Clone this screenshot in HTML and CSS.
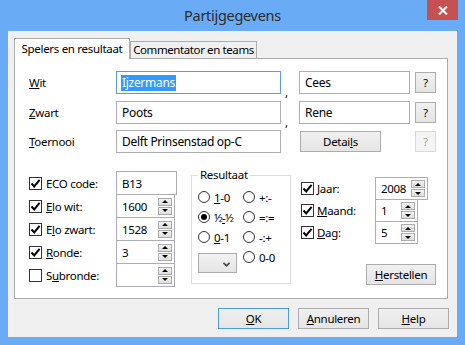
FILE: index.html
```html
<!DOCTYPE html>
<html>
<head>
<meta charset="utf-8">
<link rel="stylesheet" href="styles.css">
</head>
<body>
<div class="window">
  <div class="titlebar">
    <div class="title">Partijgegevens</div>
    <div class="close"><svg width="10" height="9" viewBox="0 0 10 9"><path d="M1 0.5 L9 8.5 M9 0.5 L1 8.5" stroke="#fff" stroke-width="2"/></svg></div>
  </div>
  <div class="client">
    <div class="tabs">
      <div class="tab active">Spelers en resultaat</div>
      <div class="tab">Commentator en teams</div>
    </div>
    <div class="panel">
      <div class="names">
        <div class="lbl"><u>W</u>it</div>
        <div class="field focus"><span class="sel">Ijzermans</span></div>
        <div class="comma">,</div>
        <div class="field first">Cees</div>
        <div class="btn qbtn">?</div>

        <div class="lbl"><u>Z</u>wart</div>
        <div class="field">Poots</div>
        <div class="comma">,</div>
        <div class="field first">Rene</div>
        <div class="btn qbtn">?</div>

        <div class="lbl"><u>T</u>oernooi</div>
        <div class="field">Delft Prinsenstad op-C</div>
        <div></div>
        <div class="btn details">Detai<u>l</u>s</div>
        <div class="btn qbtn disabled">?</div>
      </div>

      <div class="lower">
        <div class="fields">
          <div class="frow">
            <div class="lab"><span class="cb on"><svg width="11" height="11" viewBox="0 0 11 11"><path d="M1.5 5.5 L4.2 8.4 L9.6 1.8" fill="none" stroke="#000" stroke-width="2"/></svg></span>ECO code:</div>
            <div class="box eco">B13</div>
          </div>
          <div class="frow">
            <div class="lab"><span class="cb on"><svg width="11" height="11" viewBox="0 0 11 11"><path d="M1.5 5.5 L4.2 8.4 L9.6 1.8" fill="none" stroke="#000" stroke-width="2"/></svg></span><span><u>E</u>lo wit:</span></div>
            <div class="box spinbox">1600<span class="spin"><span class="sb up"></span><span class="sb down"></span></span></div>
          </div>
          <div class="frow">
            <div class="lab"><span class="cb on"><svg width="11" height="11" viewBox="0 0 11 11"><path d="M1.5 5.5 L4.2 8.4 L9.6 1.8" fill="none" stroke="#000" stroke-width="2"/></svg></span><span>E<u>l</u>o zwart:</span></div>
            <div class="box spinbox">1528<span class="spin"><span class="sb up"></span><span class="sb down"></span></span></div>
          </div>
          <div class="frow">
            <div class="lab"><span class="cb on"><svg width="11" height="11" viewBox="0 0 11 11"><path d="M1.5 5.5 L4.2 8.4 L9.6 1.8" fill="none" stroke="#000" stroke-width="2"/></svg></span><span><u>R</u>onde:</span></div>
            <div class="box spinbox">3<span class="spin"><span class="sb up"></span><span class="sb down"></span></span></div>
          </div>
          <div class="frow">
            <div class="lab"><span class="cb"></span><span>S<u>u</u>bronde:</span></div>
            <div class="box spinbox"><span class="spin"><span class="sb up"></span><span class="sb down"></span></span></div>
          </div>
        </div>

        <fieldset class="group">
          <legend>Resultaat</legend>
          <div class="rgrid">
            <div class="ri"><span class="radio"></span><span><u>1</u>-0</span></div>
            <div class="ri"><span class="radio"></span><span>+:-</span></div>
            <div class="ri"><span class="radio on"></span><span class="half">½<u>-</u>½</span></div>
            <div class="ri"><span class="radio"></span><span>=:=</span></div>
            <div class="ri"><span class="radio"></span><span><u>0</u>-1</span></div>
            <div class="ri"><span class="radio"></span><span>-:+</span></div>
            <div class="combo"><svg width="7" height="5" viewBox="0 0 7 5"><path d="M0.5 0.8 L3.5 3.8 L6.5 0.8" fill="none" stroke="#444" stroke-width="1.6"/></svg></div>
            <div class="ri"><span class="radio"></span><span>0-0</span></div>
          </div>
        </fieldset>

        <div class="date">
          <div class="drow">
            <div class="lab"><span class="cb on"><svg width="11" height="11" viewBox="0 0 11 11"><path d="M1.5 5.5 L4.2 8.4 L9.6 1.8" fill="none" stroke="#000" stroke-width="2"/></svg></span><span><u>J</u>aar:</span></div>
            <div class="box spinbox jaar">2008<span class="spin"><span class="sb up"></span><span class="sb down"></span></span></div>
          </div>
          <div class="drow">
            <div class="lab"><span class="cb on"><svg width="11" height="11" viewBox="0 0 11 11"><path d="M1.5 5.5 L4.2 8.4 L9.6 1.8" fill="none" stroke="#000" stroke-width="2"/></svg></span><span><u>M</u>aand:</span></div>
            <div class="box spinbox small">1<span class="spin"><span class="sb up"></span><span class="sb down"></span></span></div>
          </div>
          <div class="drow">
            <div class="lab"><span class="cb on"><svg width="11" height="11" viewBox="0 0 11 11"><path d="M1.5 5.5 L4.2 8.4 L9.6 1.8" fill="none" stroke="#000" stroke-width="2"/></svg></span><span><u>D</u>ag:</span></div>
            <div class="box spinbox small">5<span class="spin"><span class="sb up"></span><span class="sb down"></span></span></div>
          </div>
          <div class="btn herstellen"><span><u>H</u>erstellen</span></div>
        </div>
      </div>
    </div>
    <div class="buttons">
      <div class="btn dlg default"><u>O</u>K</div>
      <div class="btn dlg"><span><u>A</u>nnuleren</span></div>
      <div class="btn dlg"><span><u>H</u>elp</span></div>
    </div>
  </div>
</div>
</body>
</html>
```
FILE: styles.css
```css
* { box-sizing: border-box; }
html, body { margin: 0; padding: 0; }
body {
  width: 465px;
  height: 345px;
  overflow: hidden;
  font-family: "Noto Sans", "Open Sans", sans-serif;
  font-size: 11.5px;
  letter-spacing: -0.3px;
  color: #000;
}
u { text-decoration-thickness: 1px; text-underline-offset: 1px; }

.window {
  width: 465px;
  height: 345px;
  background: #6aabf5;
  display: flex;
  flex-direction: column;
}
.titlebar {
  height: 31px;
  display: grid;
  grid-template-columns: 1fr auto 1fr;
  align-items: start;
}
.title {
  grid-column: 2;
  font-size: 14.5px;
  line-height: 30px;
  color: #2b2b2b;
}
.close {
  grid-column: 3;
  justify-self: end;
  margin-right: 7px;
  width: 31px;
  height: 20px;
  background: #c75050;
  display: flex;
  align-items: center;
  justify-content: center;
}

.client {
  flex: 1;
  margin: 0 8px 8px 8px;
  background: #f0f0f0;
  display: flex;
  flex-direction: column;
  padding: 7px 9px 0 6px;
}

.tabs {
  display: flex;
  align-items: flex-end;
  height: 21px;
  margin-bottom: -1px;
  position: relative;
  z-index: 1;
}
.tab {
  width: 127px;
  height: 18px;
  border: 1px solid #acacac;
  background: #f0f0f0;
  text-align: center;
  line-height: 16px;
  white-space: nowrap;
  letter-spacing: -0.4px;
}
.tab.active {
  width: 116px;
  height: 21px;
  background: #fff;
  border-bottom: none;
  line-height: 19px;
  letter-spacing: -0.3px;
}

.panel {
  background: #fff;
  border: 1px solid #acacac;
  height: 241px;
  padding: 12px 0 0 14px;
}

.names {
  display: grid;
  grid-template-columns: 87px 165px 18px 116px 21px;
  grid-template-rows: 23px 23px 23px;
  row-gap: 6.5px;
  align-items: center;
}
.lbl { align-self: center; }
.field {
  height: 23px;
  border: 1px solid #abadb3;
  display: flex;
  align-items: center;
  padding-left: 5px;
  font-size: 12px;
  letter-spacing: -0.3px;
  background: #fff;
  white-space: nowrap;
}
.field.first { width: 111px; }
.field.focus { border-color: #569de5; }
.sel {
  background: #3399ff;
  color: #fff;
  line-height: 16px;
  padding: 0 1px;
  margin-left: -1px;
}
.comma {
  align-self: end;
  padding-left: 4px;
  line-height: 10px;
  margin-bottom: -4px;
}

.btn {
  border: 1px solid #acacac;
  background: linear-gradient(#f0f0f0, #e5e5e5);
  display: flex;
  align-items: center;
  justify-content: center;
  height: 21px;
  white-space: nowrap;
}
.qbtn { width: 21px; justify-self: start; font-size: 11px; }
.qbtn.disabled {
  border-color: #d9d9d9;
  background: #f4f4f4;
  color: #a3a3a3;
}
.details { width: 81px; margin-left: 1px; }

.lower {
  display: flex;
  align-items: flex-start;
  margin-top: 15px;
}

.fields {
  width: 148px;
  margin-top: 3px;
  display: flex;
  flex-direction: column;
}
.frow, .drow {
  display: flex;
  align-items: center;
  height: 24px;
}
.frow + .frow { margin-top: -1px; }
.frow .lab { width: 87px; }
.lab { display: flex; align-items: center; gap: 4px; white-space: nowrap; }
.cb {
  width: 13px;
  height: 13px;
  border: 1px solid #333;
  background: #fff;
  display: inline-flex;
  align-items: center;
  justify-content: center;
  flex: none;
}
.box {
  height: 24px;
  border: 1px solid #abadb3;
  background: #fff;
  display: flex;
  align-items: center;
  padding-left: 5px;
}
.eco { width: 61px; }
.spinbox { width: 59px; }
.spin {
  margin-left: auto;
  margin-right: 2px;
  display: flex;
  flex-direction: column;
  gap: 1px;
}
.sb {
  width: 14px;
  height: 8px;
  border: 1px solid #acacac;
  background: linear-gradient(#f4f4f4, #dedede);
  display: flex;
  align-items: center;
  justify-content: center;
}
.sb::after {
  content: "";
  width: 0;
  height: 0;
  border-left: 3px solid transparent;
  border-right: 3px solid transparent;
}
.sb.up::after { border-bottom: 3px solid #000; }
.sb.down::after { border-top: 3px solid #000; }

.group {
  width: 100px;
  margin: 0 0 0 14px;
  padding: 5px 0 10px 6px;
  border: 1px solid #dcdcdc;
  min-width: 0;
}
.group legend {
  padding: 0 2px;
  line-height: 14px;
}
.rgrid {
  display: grid;
  grid-template-columns: 45px auto;
  grid-template-rows: 20px 20px 20px auto;
}
.ri {
  display: flex;
  align-items: center;
  gap: 4px;
  height: 20px;
  white-space: nowrap;
}
.radio {
  width: 12px;
  height: 12px;
  border-radius: 50%;
  border: 1px solid #333;
  background: #fff;
  display: inline-flex;
  align-items: center;
  justify-content: center;
  flex: none;
}
.radio.on::after {
  content: "";
  width: 6px;
  height: 6px;
  border-radius: 50%;
  background: #000;
}
.half { letter-spacing: -0.8px; }
.combo {
  margin-top: 6px;
  width: 39px;
  height: 20px;
  border: 1px solid #acacac;
  background: linear-gradient(#f2f2f2, #e5e5e5);
  display: flex;
  align-items: center;
  justify-content: flex-end;
  padding: 3px 6px 0 0;
}

.date {
  margin-left: 10px;
  margin-top: 9px;
  width: 135px;
  display: flex;
  flex-direction: column;
}
.drow { height: 23px; }
.drow + .drow { margin-top: -1px; }
.drow .lab { width: 74px; gap: 3px; }
.drow .box { height: 23px; }
.jaar { width: 53px; }
.small { width: 43px; }
.herstellen {
  align-self: flex-end;
  width: 70px;
  margin-top: 20px;
}

.buttons {
  display: flex;
  justify-content: flex-end;
  gap: 9px;
  margin-top: 9px;
  margin-right: -1px;
}
.dlg { width: 71px; }
.dlg.default { border-color: #4d9be6; }
```
